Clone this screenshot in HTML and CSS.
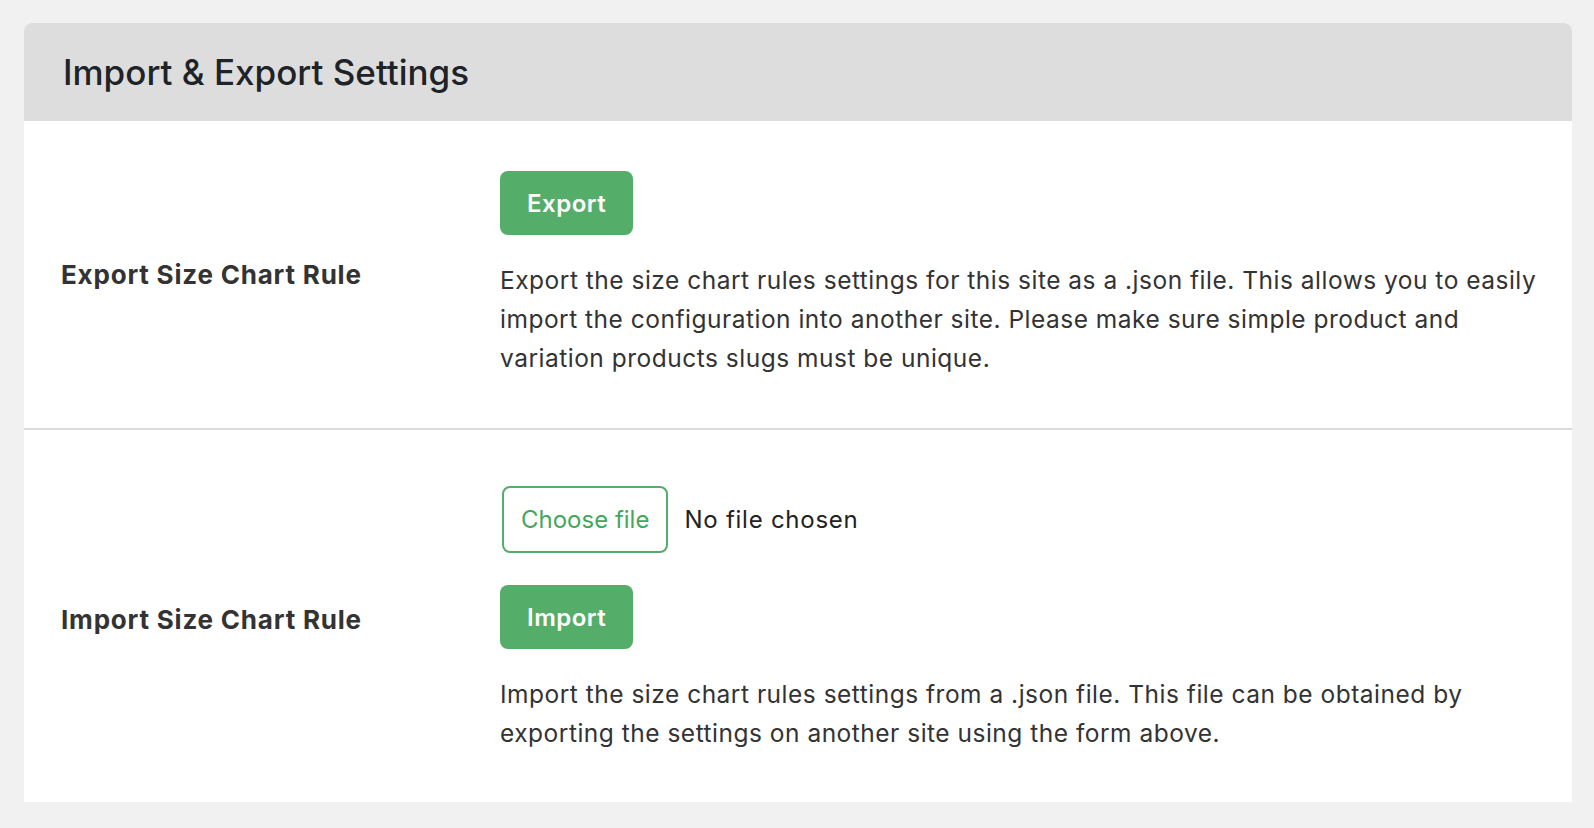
FILE: index.html
```html
<!DOCTYPE html>
<html lang="en">
<head>
<meta charset="utf-8">
<title>Import &amp; Export Settings</title>
<link rel="stylesheet" href="styles.css">
</head>
<body>
<div class="card">
  <div class="card-header">
    <h2 class="card-title">Import &amp; Export Settings</h2>
  </div>
  <div class="row row-export">
    <div class="label">Export Size Chart Rule</div>
    <div class="field">
      <button class="btn" type="button">Export</button>
      <p class="desc">Export the size chart rules settings for this site as a .json file. This allows you to easily import the configuration into another site. Please make sure simple product and variation products slugs must be unique.</p>
    </div>
  </div>
  <div class="row row-import">
    <div class="label">Import Size Chart Rule</div>
    <div class="field">
      <div class="file">
        <span class="file-btn">Choose file</span>
        <span class="file-name">No file chosen</span>
      </div>
      <button class="btn btn-import" type="button">Import</button>
      <p class="desc">Import the size chart rules settings from a .json file. This file can be obtained by exporting the settings on another site using the form above.</p>
    </div>
  </div>
</div>
</body>
</html>
```

FILE: styles.css
```css
* { box-sizing: border-box; }
html, body { margin: 0; padding: 0; }
body {
  background: #f1f1f1;
  font-family: Inter, "Liberation Sans", sans-serif;
  color: #333333;
  padding: 23px 22px 0 24px;
}
.card {
  width: 1548px;
  background: #ffffff;
  border-radius: 8px 8px 0 0;
}
.card-header {
  background: #dddddd;
  height: 98px;
  border-radius: 8px 8px 0 0;
  display: flex;
  align-items: center;
  padding-left: 39px;
}
.card-title {
  margin: 0;
  font-size: 35px;
  font-weight: 500;
  color: #1d2327;
  letter-spacing: 0;
}
.row {
  display: flex;
  align-items: center;
  padding: 50px 24px 50px 37px;
}
.row-export { border-bottom: 2px solid #dadada; }
.row-import { padding-top: 56px; padding-bottom: 49px; }
.label {
  width: 439px;
  flex: none;
  font-size: 26px;
  font-weight: 700;
  color: #333333;
  letter-spacing: 0.8px;
}
.field { flex: 1; min-width: 0; }
.btn {
  display: block;
  height: 64px;
  padding: 0 27px;
  background: #55ad6a;
  color: #ffffff;
  border: none;
  border-radius: 8px;
  font-family: inherit;
  font-size: 24px;
  font-weight: 600;
  letter-spacing: 0.5px;
  cursor: pointer;
}
.btn-import { margin-top: 32px; }
.desc {
  margin: 26px 0 0;
  font-size: 24.5px;
  line-height: 39px;
  color: #333333;
  letter-spacing: 0.5px;
}
.file {
  display: flex;
  align-items: center;
  gap: 16px;
  padding-left: 2px;
}
.file-btn {
  display: inline-flex;
  align-items: center;
  height: 67px;
  padding: 0 17px;
  border: 2px solid #55ad6a;
  border-radius: 8px;
  color: #46a65c;
  font-size: 24px;
}
.file-name {
  font-size: 24px;
  color: #222222;
  letter-spacing: 0.75px;
}
```
